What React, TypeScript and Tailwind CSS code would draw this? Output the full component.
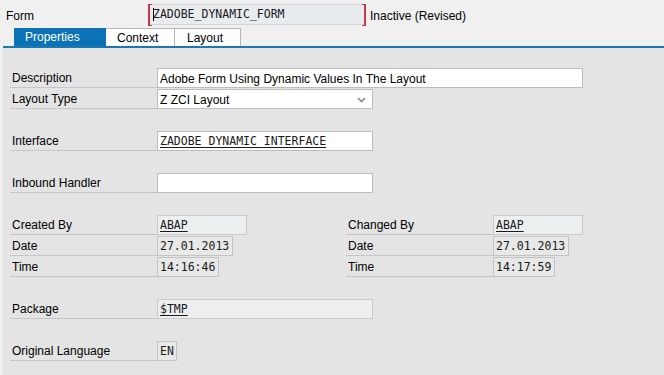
import React from 'react';

const sans = { fontFamily: '"Liberation Sans", Arial, sans-serif' };
const mono = { fontFamily: '"DejaVu Sans Mono", "Liberation Mono", monospace' };

function Label({ text, width = 'w-[147px]' }: { text: string; width?: string }) {
  return (
    <div className={`${width} h-[20px] flex items-center pl-[2px] pt-[1px] border-b border-[#c6c6c6] shrink-0`}>
      {text}
    </div>
  );
}

function Field({
  value = '',
  width,
  tone = 'input',
  link = false,
  isMono = true,
}: {
  value?: string;
  width: string;
  tone?: 'input' | 'display' | 'readonly';
  link?: boolean;
  isMono?: boolean;
}) {
  const toneCls =
    tone === 'input'
      ? 'bg-white border-[#bdbdbd]'
      : tone === 'display'
      ? 'bg-[#eceef0] border-[#c9c9c9]'
      : 'bg-[#e8e8e8] border-[#c3c3c3]';
  return (
    <div
      className={`${width} h-[20px] border ${toneCls} flex items-center pl-[2px] pt-[1px] shrink-0 overflow-hidden whitespace-nowrap`}
    >
      <span
        className={`${isMono ? 'text-[11.5px] text-[#1a1a1a]' : 'text-[12px]'} ${
          link ? 'underline underline-offset-[2px]' : ''
        }`}
        style={isMono ? mono : undefined}
      >
        {value}
      </span>
    </div>
  );
}

function Row({ children }: { children?: React.ReactNode }) {
  return <div className="h-[21px] flex items-start">{children}</div>;
}

export default function App() {
  return (
    <div className="w-[664px] h-[375px] bg-[#f0f0f0] text-[12px] text-black overflow-hidden" style={sans}>
      {/* Header */}
      <div className="h-[28px] flex items-start">
        <div className="w-[148px] pl-[6px] pt-[7px]">Form</div>
        <div className="relative mt-[4px] w-[218px] h-[21px] bg-[#e9ecef] border-y border-[#d4d4d4] flex items-center pl-[5px]">
          <span className="absolute left-0 -top-[1px] w-[4px] h-[22px] border-l-2 border-y border-[#c23a4a]" />
          <span className="absolute right-0 -top-[1px] w-[4px] h-[22px] border-r-2 border-y border-[#c23a4a]" />
          <span className="w-[1px] h-[13px] bg-black" />
          <span className="text-[11.5px] text-[#1a1a1a] -ml-[1px]" style={mono}>ZADOBE_DYNAMIC_FORM</span>
        </div>
        <div className="pl-[4px] pt-[7px]">Inactive (Revised)</div>
      </div>

      {/* Tabs */}
      <div className="h-[18px] flex items-stretch pl-[14px]">
        <div className="w-[92px] bg-[#0b73b5] text-white flex items-center pl-[11px]">Properties</div>
        <div className="w-[69px] bg-white border-t border-r border-[#b5b5b5] flex items-center pl-[11px]">Context</div>
        <div className="w-[66px] bg-white border-t border-r border-[#b5b5b5] flex items-center pl-[12px]">Layout</div>
      </div>
      <div className="ml-[3px] h-[2px] bg-[#1a78b6]" />

      {/* Content */}
      <div className="ml-[3px] h-[327px] bg-[#e4e4e4] pt-[20px] pl-[7px]">
        <Row>
          <Label text="Description" />
          <Field value="Adobe Form Using Dynamic Values In The Layout" width="w-[426px]" isMono={false} />
        </Row>
        <Row>
          <Label text="Layout Type" />
          <div className="relative w-[216px] h-[20px] bg-white border border-[#bdbdbd] flex items-center pl-[2px] pt-[1px]">
            Z ZCI Layout
            <svg className="absolute right-[6px] top-[7px]" width="9" height="6" viewBox="0 0 9 6">
              <path d="M1 1 L4.5 4.5 L8 1" fill="none" stroke="#8a8a8a" strokeWidth="1.6" />
            </svg>
          </div>
        </Row>
        <Row />
        <Row>
          <Label text="Interface" />
          <Field value="ZADOBE_DYNAMIC_INTERFACE" width="w-[216px]" link />
        </Row>
        <Row />
        <Row>
          <Label text="Inbound Handler" />
          <Field width="w-[216px]" />
        </Row>
        <Row />
        <Row>
          <Label text="Created By" />
          <Field value="ABAP" width="w-[90px]" tone="display" link />
          <div className="w-[99px]" />
          <Label text="Changed By" />
          <Field value="ABAP" width="w-[90px]" tone="display" link />
        </Row>
        <Row>
          <Label text="Date" />
          <Field value="27.01.2013" width="w-[76px]" tone="readonly" />
          <div className="w-[113px]" />
          <Label text="Date" />
          <Field value="27.01.2013" width="w-[76px]" tone="readonly" />
        </Row>
        <Row>
          <Label text="Time" />
          <Field value="14:16:46" width="w-[62px]" tone="readonly" />
          <div className="w-[127px]" />
          <Label text="Time" />
          <Field value="14:17:59" width="w-[62px]" tone="readonly" />
        </Row>
        <Row />
        <Row>
          <Label text="Package" />
          <Field value="$TMP" width="w-[216px]" tone="display" link />
        </Row>
        <Row />
        <Row>
          <Label text="Original Language" />
          <Field value="EN" width="w-[20px]" tone="readonly" />
        </Row>
      </div>
    </div>
  );
}
